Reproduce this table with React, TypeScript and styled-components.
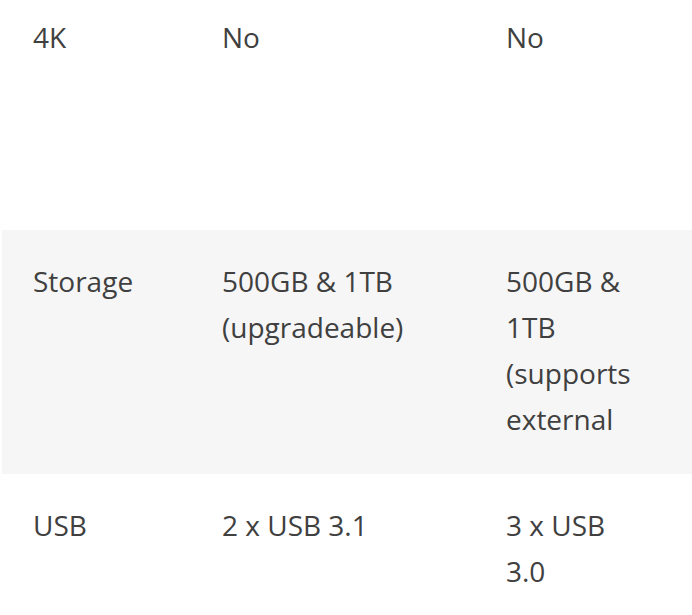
import styled, { createGlobalStyle } from "styled-components"

const Global = createGlobalStyle`
body {
    margin: 0;
    background: #fff;
    font-family: "Open Sans", "Liberation Sans", sans-serif;
}
`;

const rows = [
  { name: "4K", a: "No", b: "No", top: true },
  { name: "Storage", a: "500GB & 1TB (upgradeable)", b: "500GB & 1TB (supports external" },
  { name: "USB", a: "2 x USB 3.1", b: "3 x USB 3.0" },
];

const App = () => {
  return (
    <div>
      <Global />
      <Table>
        {rows.map((r, i) => (
          <Row key={r.name} $shaded={i % 2 === 1} $top={!!r.top}>
            <Cell>{r.name}</Cell>
            <Cell>{r.a}</Cell>
            <Cell $narrow>{r.b}</Cell>
          </Row>
        ))}
      </Table>
    </div>
  )
}

export default App;

const Cell = styled.div<{ $narrow?: boolean }>`
padding-left: 31px;
max-width: ${(p) => (p.$narrow ? "136px" : "none")};
`;

const Row = styled.div<{ $shaded: boolean; $top: boolean }>`
display: grid;
grid-template-columns: 189px 284px 1fr;
align-items: start;
background: ${(p) => (p.$shaded ? "#f6f6f6" : "#fff")};
padding: ${(p) => (p.$top ? "14px 0 0" : "28px 0 32px")};
height: ${(p) => (p.$top ? "230px" : "auto")};
box-sizing: border-box;
`;

const Table = styled.div`
margin-left: 2px;
color: #404040;
font-size: 28px;
line-height: 46px;
`;
